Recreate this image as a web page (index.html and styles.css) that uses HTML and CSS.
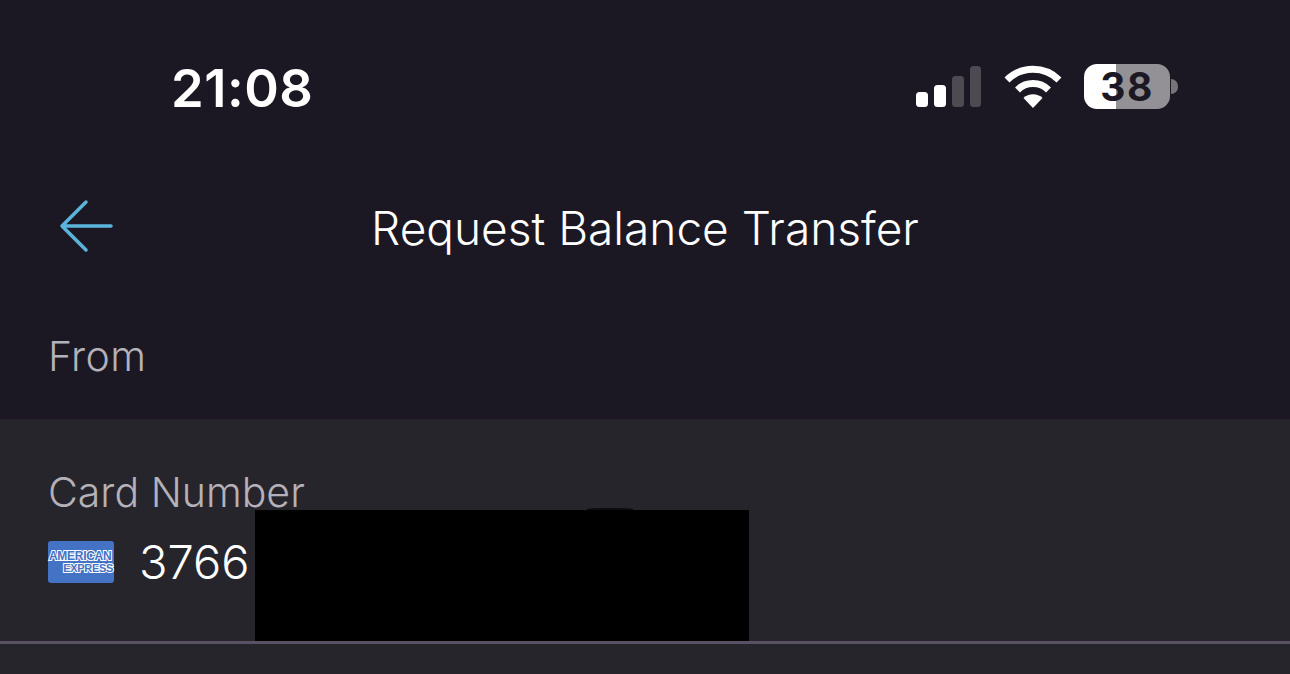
FILE: index.html
```html
<!DOCTYPE html>
<html>
    <head>
        <meta charset="utf-8">
        <title>Request Balance Transfer</title>
        <link rel="stylesheet" href="styles.css">
    </head>
    <body>
        <div class="statusbar">
            <span class="time">21:08</span>
            <div class="status-icons">
                <svg class="signal" width="66" height="42" viewBox="0 0 66 42">
                    <rect x="0" y="26" width="12" height="15" rx="3.5" fill="#fff"/>
                    <rect x="18" y="19" width="12" height="22" rx="3.5" fill="#fff"/>
                    <rect x="36" y="10" width="12" height="31" rx="3.5" fill="#4e4a52"/>
                    <rect x="54" y="0" width="11" height="41" rx="3.5" fill="#4e4a52"/>
                </svg>
                <svg class="wifi" width="60" height="44" viewBox="0 0 60 44">
                    <path d="M4 15 A37 37 0 0 1 56 15" fill="none" stroke="#fff" stroke-width="7"/>
                    <path d="M14.5 25 A22 22 0 0 1 45.500 25" fill="none" stroke="#fff" stroke-width="7"/>
                    <path d="M20.500 33 L30 43 L39.500 33 A14 14 0 0 0 20.500 33 Z" fill="#fff"/>
                </svg>
                <div class="battery">
                    <div class="battery-body"><span>38</span></div>
                    <div class="battery-cap"></div>
                </div>
            </div>
        </div>
        <div class="navbar">
            <svg class="back" width="56" height="54" viewBox="0 0 56 54">
                <path d="M29 3 L5 27 L29 51 M5 27 H54" fill="none" stroke="#5bb4dc" stroke-width="3.500" stroke-linecap="round" stroke-linejoin="round"/>
            </svg>
            <h1>Request Balance Transfer</h1>
        </div>
        <div class="section-title">From</div>
        <div class="card">
            <div class="field">
                <div class="label">Card Number</div>
                <div class="value">
                    <div class="amex">
                        <span>AMERICAN</span>
                        <span class="express">EXPRESS</span>
                    </div>
                    <span class="number">3766</span>
                </div>
            </div>
            <!-- 打码的黑块 压在内容上面 -->
            <div class="redact"></div>
        </div>
    </body>
</html>
```
FILE: styles.css
```css
*{
    margin: 0;
    padding: 0;
    box-sizing: border-box;
}
html,body{
    width: 1290px;
    height: 674px;
    overflow: hidden;
}
body{
    background: #1c1823;
    font-family: Inter, "Liberation Sans", sans-serif;
    color: #fff;
}
.statusbar{
    height: 175px;
    display: flex;
    justify-content: space-between;
    align-items: flex-start;
    padding: 58px 112px 0 171px;
}
.time{
    font-size: 52.5px;
    font-weight: 600;
    line-height: 60px;
    letter-spacing: 0.5px;
}
.status-icons{
    display: flex;
    align-items: center;
    gap: 22px;
    margin-top: 6px;
}
.signal{
    display: block;
    margin-right: -1px;
}
.wifi{
    display: block;
}
.battery{
    display: flex;
    align-items: center;
    margin-left: -1px;
}
.battery-body{
    width: 86px;
    height: 45px;
    border-radius: 13px;
    background: linear-gradient(90deg, #fff 0, #fff 32px, #949196 32px);
    color: #1c1823;
    font-size: 39px;
    font-weight: 700;
    line-height: 45px;
    text-align: center;
    letter-spacing: 1.5px;
}
.battery-cap{
    width: 7px;
    height: 15px;
    margin-left: 1px;
    border-radius: 0 8px 8px 0;
    background: #77747a;
}
.navbar{
    height: 106px;
    display: flex;
    align-items: center;
    justify-content: center;
    position: relative;
}
.back{
    position: absolute;
    left: 57px;
    top: 24px;
}
.navbar h1{
    font-size: 46px;
    font-weight: 300;
    line-height: 106px;
}
.section-title{
    height: 138px;
    padding: 48px 0 0 48px;
    font-size: 41px;
    font-weight: 300;
    line-height: 54px;
    letter-spacing: 0.4px;
    color: #b4b1b8;
}
.card{
    height: 255px;
    background: #27252c;
    position: relative;
}
.field{
    height: 225px;
    padding: 46px 0 0 48px;
    border-bottom: 3px solid #5a5064;
}
.label{
    font-size: 41px;
    font-weight: 300;
    line-height: 54px;
    color: #b4b1b8;
}
.value{
    display: flex;
    align-items: center;
    gap: 25px;
    margin-top: 18px;
}
.amex{
    width: 66px;
    height: 42px;
    border-radius: 3px;
    background: #4472c4;
    display: flex;
    flex-direction: column;
    justify-content: center;
    color: #4472c4;
    -webkit-text-stroke: 2px #fff;
    paint-order: stroke fill;
    font-family: "Liberation Sans", sans-serif;
    font-size: 12px;
    font-weight: 700;
    line-height: 12px;
    letter-spacing: -0.3px;
}
.amex span{
    padding-left: 1px;
}
.amex .express{
    text-align: right;
    padding-right: 1px;
    font-size: 11px;
}
.number{
    font-size: 47px;
    font-weight: 300;
    line-height: 50px;
}
.redact{
    position: absolute;
    left: 255px;
    top: 91px;
    width: 494px;
    height: 131px;
    background: #000;
}
/* 黑块顶上露出来的一点点 */
.redact::before{
    content: "";
    position: absolute;
    left: 332px;
    top: -2px;
    width: 46px;
    height: 2px;
    border-radius: 50% 50% 0 0;
    background: #0c0b0e;
}
```
